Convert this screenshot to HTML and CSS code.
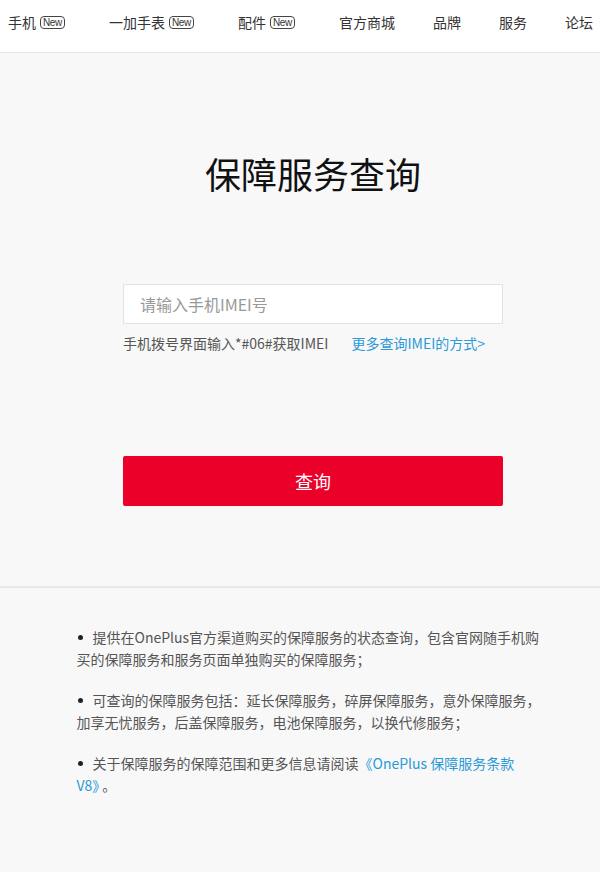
FILE: index.html
```html
<!DOCTYPE html>
<html lang="zh-CN">
<head>
<meta charset="utf-8">
<title>保障服务查询</title>
<link rel="stylesheet" href="styles.css">
</head>
<body>
<div class="page">
  <nav class="nav">
    <a class="nav-item">手机<span class="badge">New</span></a>
    <a class="nav-item">一加手表<span class="badge">New</span></a>
    <a class="nav-item">配件<span class="badge">New</span></a>
    <a class="nav-item">官方商城</a>
    <a class="nav-item">品牌</a>
    <a class="nav-item">服务</a>
    <a class="nav-item">论坛</a>
  </nav>
  <main class="main">
    <section class="query">
      <h1 class="title">保障服务查询</h1>
      <input class="imei-input" type="text" placeholder="请输入手机IMEI号">
      <div class="hint">
        <span class="hint-text">手机拨号界面输入*#06#获取IMEI</span>
        <a class="link">更多查询IMEI的方式&gt;</a>
      </div>
      <button class="submit">查询</button>
    </section>
    <section class="notes">
      <p class="note">提供在OnePlus官方渠道购买的保障服务的状态查询，包含官网随手机购买的保障服务和服务页面单独购买的保障服务；</p>
      <p class="note">可查询的保障服务包括：延长保障服务，碎屏保障服务，意外保障服务，加享无忧服务，后盖保障服务，电池保障服务，以换代修服务；</p>
      <p class="note">关于保障服务的保障范围和更多信息请阅读<a class="link">《OnePlus 保障服务条款</a><a class="link">V8》</a><span class="period">。</span></p>
    </section>
  </main>
</div>
</body>
</html>
```

FILE: styles.css
```css
html, body {
  margin: 0;
  padding: 0;
  overflow: hidden;
  background: #f8f8f8;
}

body {
  font-family: "Noto Sans CJK SC", "Noto Sans", sans-serif;
  color: #333;
}

.page {
  width: 626px;
}

.nav {
  display: flex;
  align-items: center;
  box-sizing: border-box;
  height: 53px;
  padding: 0 0 8px 8px;
  background: #fff;
  border-bottom: 1px solid #e6e6e6;
  font-size: 14px;
  line-height: 22px;
}

.nav-item {
  display: flex;
  align-items: center;
  margin-right: 38px;
  color: #333;
  white-space: nowrap;
}

.badge {
  display: inline-block;
  box-sizing: border-box;
  margin-left: 4px;
  margin-right: 6px;
  width: 25px;
  height: 13px;
  border: 1px solid #444;
  border-radius: 4px;
  font-family: "Liberation Sans", Arial, sans-serif;
  font-size: 10px;
  line-height: 11px;
  text-align: center;
  letter-spacing: -0.3px;
  color: #333;
}

.main {
  background: #f8f8f8;
}

.query {
  display: flex;
  flex-direction: column;
  align-items: center;
  padding: 96px 0 80px;
  border-bottom: 2px solid #e8e8e8;
}

.title {
  margin: 0;
  font-size: 36px;
  line-height: 48px;
  font-weight: 400;
  color: #111;
}

.imei-input {
  box-sizing: border-box;
  width: 380px;
  height: 40px;
  margin-top: 87px;
  padding: 0 16px;
  border: 1px solid #e3e3e3;
  background: #fff;
  font-family: inherit;
  font-size: 16px;
  color: #333;
  outline: none;
}

.imei-input::placeholder {
  color: #999;
}

.hint {
  display: flex;
  width: 380px;
  margin-top: 9px;
  font-size: 14px;
  line-height: 20px;
}

.hint-text {
  color: #555;
  margin-right: 23px;
}

.link {
  color: #2a9ad8;
  text-decoration: none;
}

.period {
  margin-left: 3px;
}

.submit {
  width: 380px;
  height: 50px;
  margin-top: 103px;
  border: none;
  border-radius: 2px;
  background: #eb0029;
  color: #fff;
  font-family: inherit;
  font-size: 18px;
  cursor: pointer;
}

.notes {
  width: 473px;
  margin: 0 auto;
  padding-top: 38px;
}

.note {
  margin: 0 0 19px;
  font-size: 14px;
  line-height: 22px;
  color: #555;
}

.note::before {
  content: "";
  display: inline-block;
  width: 5px;
  height: 5px;
  margin: 0 10px 0 1px;
  border-radius: 50%;
  background: #222;
  vertical-align: 3px;
}
```
